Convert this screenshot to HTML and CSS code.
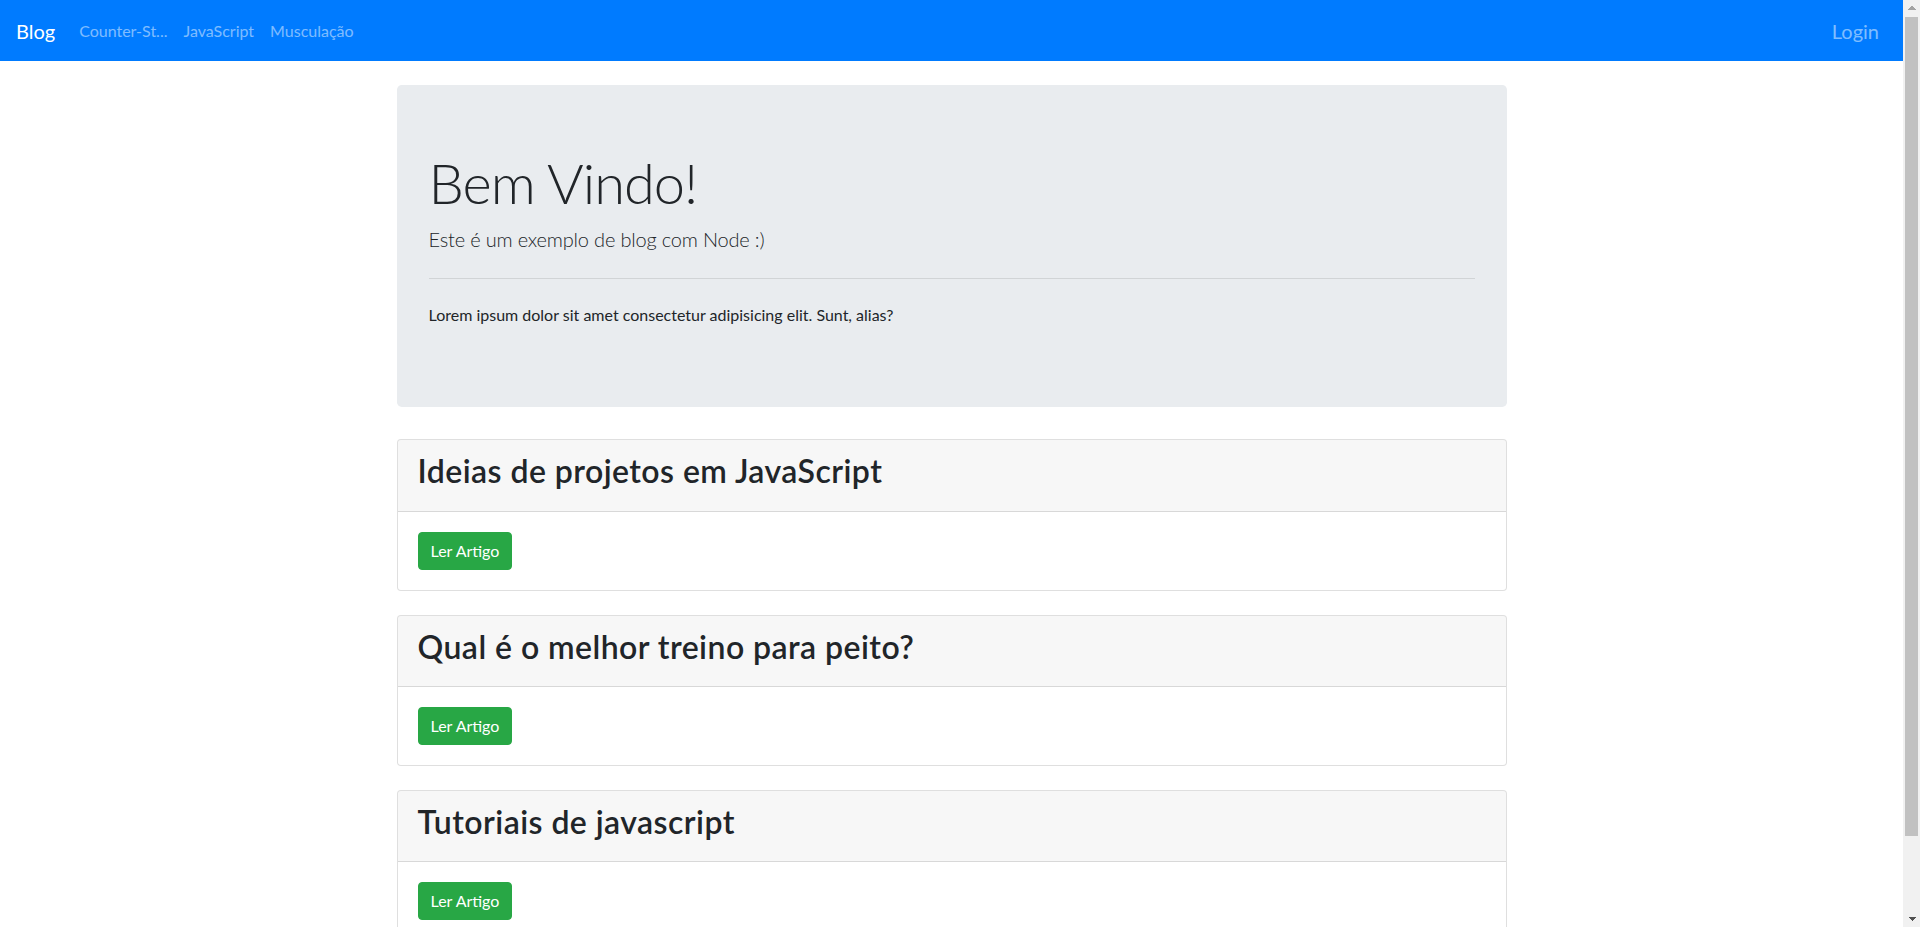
FILE: index.html
```html
<!DOCTYPE html>
<html lang="pt-BR">
<head>
<meta charset="utf-8">
<title>Blog</title>
<link rel="stylesheet" href="styles.css">
</head>
<body>
<div class="viewport">
  <div class="page">
    <nav class="navbar">
      <a class="brand" href="#">Blog</a>
      <ul class="nav-links">
        <li><a class="nav-link" href="#">Counter-St...</a></li>
        <li><a class="nav-link" href="#">JavaScript</a></li>
        <li><a class="nav-link" href="#">Musculação</a></li>
      </ul>
      <a class="nav-link login" href="#">Login</a>
    </nav>

    <main class="container">
      <section class="jumbotron">
        <h1 class="display">Bem Vindo!</h1>
        <p class="lead">Este é um exemplo de blog com Node :)</p>
        <hr class="divider">
        <p class="text">Lorem ipsum dolor sit amet consectetur adipisicing elit. Sunt, alias?</p>
      </section>

      <article class="card">
        <div class="card-header"><h2 class="card-title">Ideias de projetos em JavaScript</h2></div>
        <div class="card-body"><a class="btn-success" href="#">Ler Artigo</a></div>
      </article>

      <article class="card">
        <div class="card-header"><h2 class="card-title">Qual é o melhor treino para peito?</h2></div>
        <div class="card-body"><a class="btn-success" href="#">Ler Artigo</a></div>
      </article>

      <article class="card">
        <div class="card-header"><h2 class="card-title">Tutoriais de javascript</h2></div>
        <div class="card-body"><a class="btn-success" href="#">Ler Artigo</a></div>
      </article>
    </main>
  </div>

  <div class="scrollbar" aria-hidden="true">
    <div class="sb-btn sb-up"></div>
    <div class="sb-track"><div class="sb-thumb"></div></div>
    <div class="sb-btn sb-down"></div>
  </div>
</div>
</body>
</html>
```
FILE: styles.css
```css
* { box-sizing: border-box; }

html, body {
  margin: 0;
  padding: 0;
  height: 100%;
  overflow: hidden;
}

body {
  font-family: "Lato", "Liberation Sans", sans-serif;
  font-size: 16px;
  line-height: 1.5;
  color: #212529;
  background: #fff;
}

a { text-decoration: none; }

.viewport {
  display: flex;
  height: 100vh;
}

.page {
  flex: 1;
  min-width: 0;
  overflow: hidden;
}

/* Navbar */
.navbar {
  display: flex;
  align-items: center;
  height: 61px;
  padding: 0 16px;
  background: #007bff;
}

.brand {
  font-size: 20px;
  line-height: 30px;
  color: #fff;
  margin-right: 16px;
}

.nav-links {
  display: flex;
  list-style: none;
  margin: 0;
  padding: 0;
  flex: 1;
}

.nav-link {
  display: block;
  padding: 0 8px;
  font-size: 16px;
  line-height: 24px;
  color: rgba(255, 255, 255, 0.5);
}

.nav-link.login {
  font-size: 20px;
  line-height: 30px;
}

/* Container */
.container {
  width: 1140px;
  margin: 0 auto;
  padding: 24px 15px 46px;
}

/* Jumbotron */
.jumbotron {
  background: #e9ecef;
  border-radius: 4.8px;
  padding: 64px 32px;
  margin-bottom: 32px;
}

.display {
  font-size: 56px;
  font-weight: 300;
  line-height: 1.2;
  letter-spacing: -1px;
  margin: 0 0 8px;
}

.lead {
  font-size: 20px;
  font-weight: 300;
  line-height: 1.5;
  letter-spacing: -0.18px;
  margin: 0 0 16px;
}

.divider {
  border: 0;
  border-top: 1px solid rgba(0, 0, 0, 0.1);
  margin: 24px 0;
  height: 0;
}

.text {
  margin: 0 0 16px;
}

/* Cards */
.card {
  border: 1px solid rgba(0, 0, 0, 0.125);
  border-radius: 4px;
  margin-bottom: 24px;
  background: #fff;
}

.card-header {
  padding: 12px 20px;
  background: rgba(0, 0, 0, 0.03);
  border-bottom: 1px solid rgba(0, 0, 0, 0.125);
  border-radius: 3px 3px 0 0;
}

.card-title {
  font-size: 32px;
  font-weight: 600;
  line-height: 1.2;
  letter-spacing: 0.45px;
  margin: 0 0 8px;
}

.card-body {
  padding: 20px;
}

.btn-success {
  display: inline-block;
  padding: 6px 12px;
  font-size: 16px;
  line-height: 24px;
  color: #fff;
  background: #28a745;
  border: 1px solid #28a745;
  border-radius: 4px;
}

/* Scrollbar rail (screenshot chrome) */
.scrollbar {
  width: 17px;
  flex: none;
  display: flex;
  flex-direction: column;
  background: #f1f1f1;
}

.sb-btn {
  height: 17px;
  flex: none;
  background-repeat: no-repeat;
  background-size: 4px 4px;
}

.sb-up {
  background-image:
    linear-gradient(to bottom right, transparent 50%, #a3a3a3 50%),
    linear-gradient(to bottom left, transparent 50%, #a3a3a3 50%);
  background-position: 4.5px 6px, 8.5px 6px;
}

.sb-down {
  background-image:
    linear-gradient(to top right, transparent 50%, #505050 50%),
    linear-gradient(to top left, transparent 50%, #505050 50%);
  background-position: 4.5px 7px, 8.5px 7px;
}

.sb-track {
  flex: 1;
  padding: 0 2px;
}

.sb-thumb {
  height: 819px;
  background: #c1c1c1;
}
```
